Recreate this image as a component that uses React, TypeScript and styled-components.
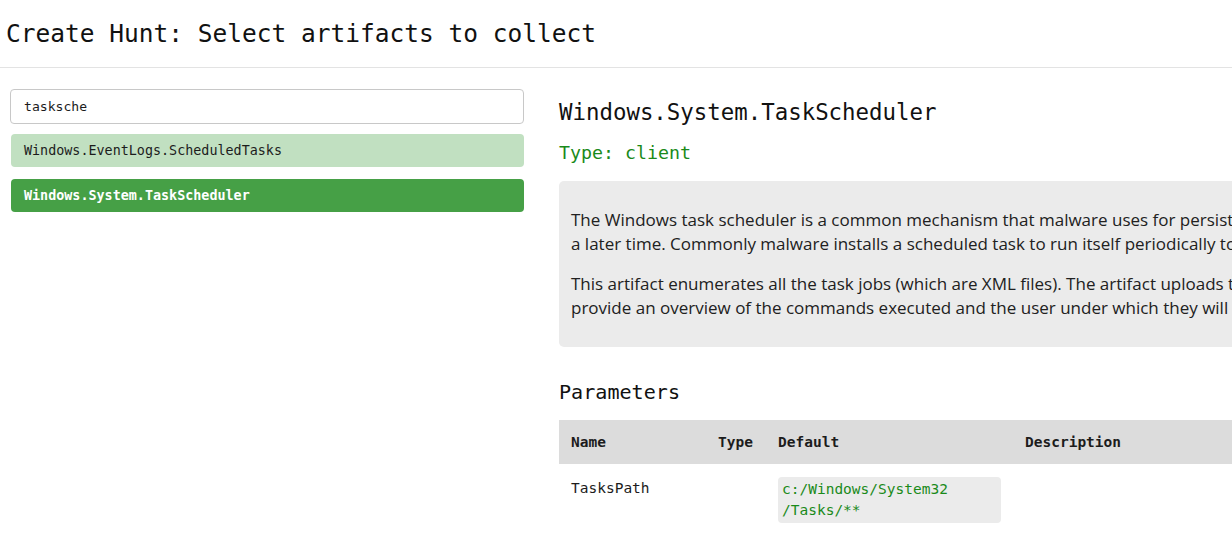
import React from "react";
import styled, { createGlobalStyle } from "styled-components";

const Global = createGlobalStyle`
  html, body { margin: 0; padding: 0; background: #fff; overflow: hidden; }
  body { width: 1232px; height: 549px; }
`;

const MONO = `"DejaVu Sans Mono", "Liberation Mono", monospace`;
const SANS = `"Open Sans", "Noto Sans", sans-serif`;

const Page = styled.div`
  width: 1232px;
  height: 549px;
  overflow: hidden;
  font-family: ${MONO};
  color: #1c1c1c;
`;

const Header = styled.header`
  height: 67px;
  border-bottom: 1px solid #e3e3e3;
  display: flex;
  align-items: center;
  padding-left: 6px;
`;

const Title = styled.h1`
  margin: 0;
  font-family: ${MONO};
  font-weight: normal;
  font-size: 24.5px;
  color: #111;
`;

const Body = styled.div`
  display: grid;
  grid-template-columns: 514px 1100px;
  column-gap: 35px;
  padding: 21px 0 0 10px;
`;

const LeftCol = styled.div`
  display: flex;
  flex-direction: column;
`;

const Search = styled.input`
  box-sizing: border-box;
  height: 35px;
  border: 1px solid #c8c8c8;
  border-radius: 4px;
  padding: 0 13px;
  font-family: ${MONO};
  font-size: 13.1px;
  color: #1c1c1c;
  outline: none;
  margin-bottom: 10px;
`;

const Item = styled.div<{ $active?: boolean }>`
  height: 33px;
  box-sizing: border-box;
  margin: 0 0 12px 1px;
  padding: 0 13px;
  display: flex;
  align-items: center;
  border-radius: 4px;
  font-size: 13.4px;
  background: ${(p) => (p.$active ? "#46a046" : "#c1e0c1")};
  color: ${(p) => (p.$active ? "#fff" : "#1c1c1c")};
  font-weight: ${(p) => (p.$active ? "bold" : "normal")};
`;

const RightCol = styled.div`
  display: flex;
  flex-direction: column;
  padding-top: 8px;
`;

const ArtifactName = styled.h2`
  margin: 0;
  font-weight: normal;
  font-size: 22.4px;
  line-height: 30px;
  color: #111;
`;

const TypeLine = styled.div`
  margin-top: 14px;
  font-size: 18.3px;
  line-height: 24px;
  color: #1a8a1a;
`;

const DescBox = styled.div`
  margin-top: 16px;
  background: #ebebeb;
  border-radius: 5px;
  padding: 27px 12px 27px;
  font-family: ${SANS};
  font-size: 17px;
  line-height: 24px;
  color: #212121;
  white-space: nowrap;
`;

const Para = styled.p`
  margin: 0 0 16px;
  &:last-child { margin-bottom: 0; }
`;

const SectionTitle = styled.h3`
  margin: 31px 0 0;
  font-weight: normal;
  font-size: 20.1px;
  line-height: 28px;
  color: #111;
`;

const Table = styled.table`
  margin-top: 14px;
  width: 100%;
  border-collapse: collapse;
  font-size: 14.5px;
`;

const Th = styled.th<{ $w?: number }>`
  text-align: left;
  background: #dcdcdc;
  height: 44px;
  padding: 0 12px;
  font-weight: bold;
  color: #1c1c1c;
  width: ${(p) => (p.$w ? `${p.$w}px` : "auto")};
`;

const Td = styled.td`
  padding: 16px 12px 12px;
  vertical-align: top;
  color: #1c1c1c;
`;

const DefaultTd = styled.td`
  padding: 13px 12px 0;
  vertical-align: top;
`;

const CodeBox = styled.div`
  width: 223px;
  box-sizing: border-box;
  background: #ebebeb;
  border-radius: 4px;
  padding: 2px 4px 2px;
  color: #1a8a1a;
  line-height: 21px;
`;

export default function App() {
  return (
    <Page>
      <Global />
      <Header>
        <Title>Create Hunt: Select artifacts to collect</Title>
      </Header>
      <Body>
        <LeftCol>
          <Search defaultValue="tasksche" />
          <Item>Windows.EventLogs.ScheduledTasks</Item>
          <Item $active>Windows.System.TaskScheduler</Item>
        </LeftCol>
        <RightCol>
          <ArtifactName>Windows.System.TaskScheduler</ArtifactName>
          <TypeLine>Type: client</TypeLine>
          <DescBox>
            <Para>
              The Windows task scheduler is a common mechanism that malware uses for persistence. It can be used to run arbitrary programs at
              <br />
              a later time. Commonly malware installs a scheduled task to run itself periodically to achieve persistence.
            </Para>
            <Para>
              This artifact enumerates all the task jobs (which are XML files). The artifact uploads the original XML files and then analyses them to
              <br />
              provide an overview of the commands executed and the user under which they will be run.
            </Para>
          </DescBox>
          <SectionTitle>Parameters</SectionTitle>
          <Table>
            <thead>
              <tr>
                <Th $w={123}>Name</Th>
                <Th $w={36}>Type</Th>
                <Th $w={223}>Default</Th>
                <Th>Description</Th>
              </tr>
            </thead>
            <tbody>
              <tr>
                <Td>TasksPath</Td>
                <Td />
                <DefaultTd>
                  <CodeBox>
                    c:/Windows/System32
                    <br />
                    /Tasks/**
                  </CodeBox>
                </DefaultTd>
                <Td />
              </tr>
            </tbody>
          </Table>
        </RightCol>
      </Body>
    </Page>
  );
}
